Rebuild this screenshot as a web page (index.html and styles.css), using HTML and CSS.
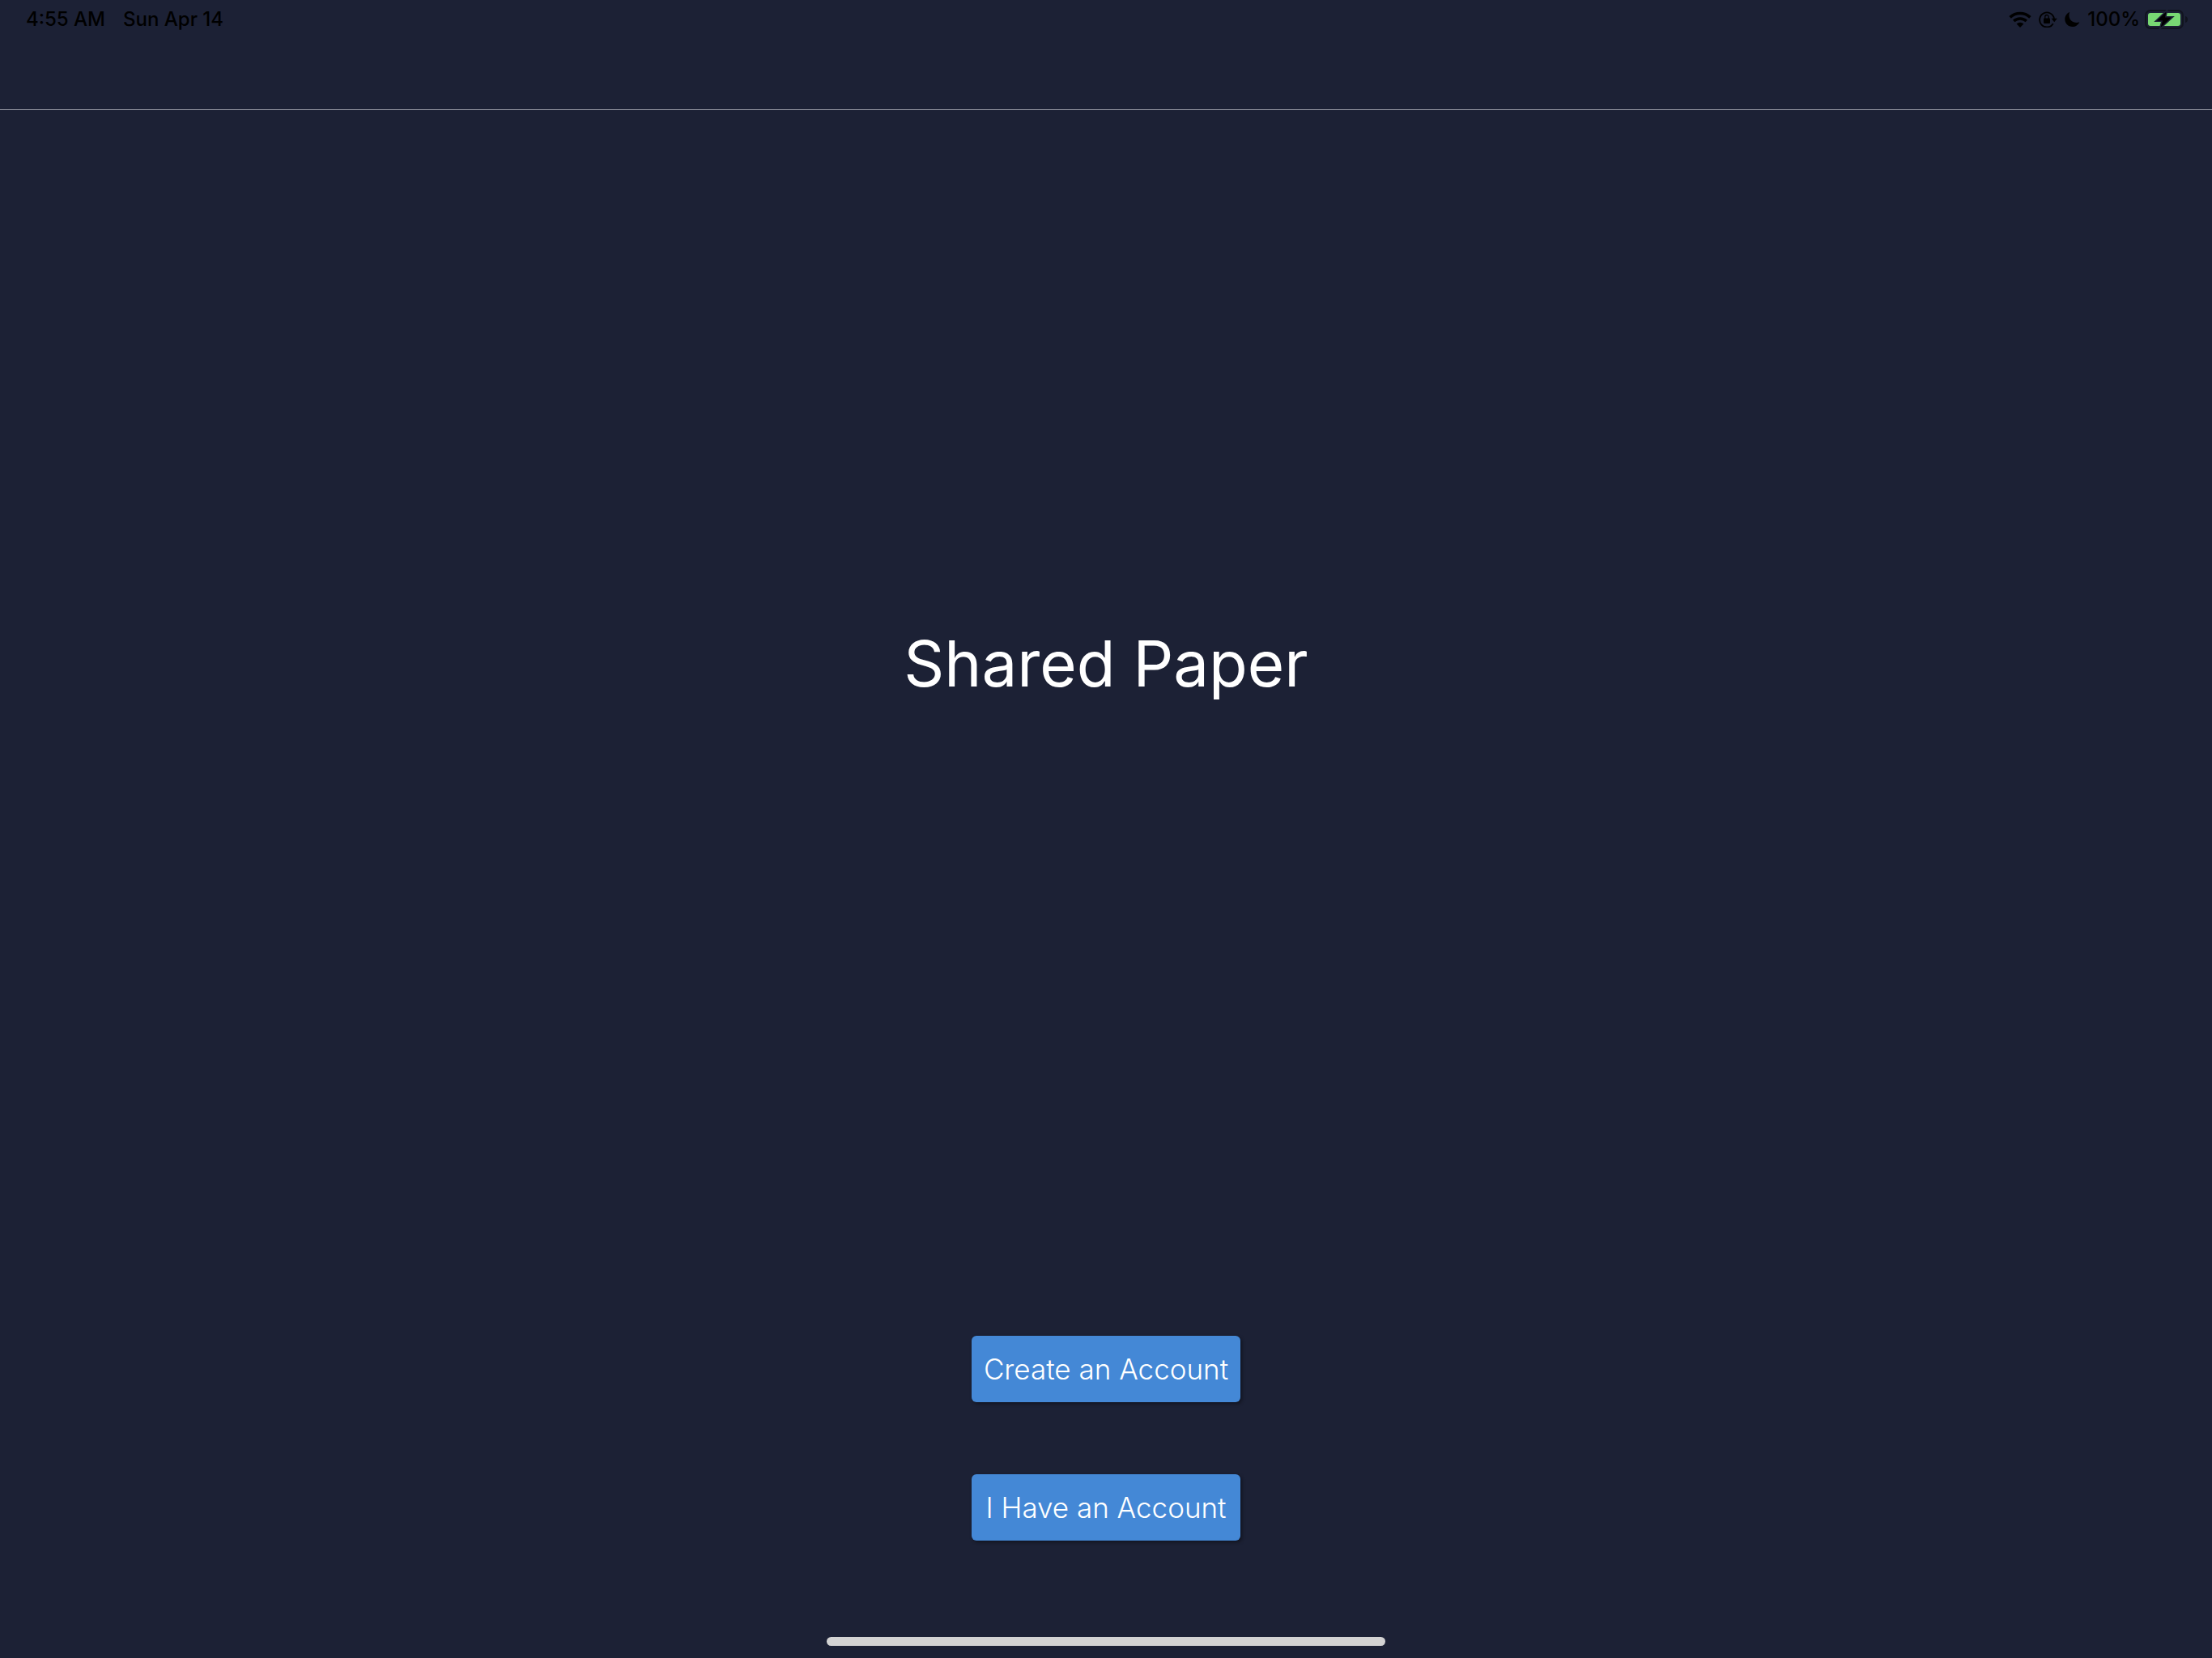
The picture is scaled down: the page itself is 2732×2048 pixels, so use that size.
FILE: index.html
```html
<!DOCTYPE html>
<html lang="en">
<head>
<meta charset="utf-8">
<meta name="viewport" content="width=device-width, initial-scale=1">
<title>Shared Paper</title>
<link rel="stylesheet" href="styles.css">
</head>
<body>
<header class="top-bar">
  <div class="status">
    <div class="status-group status-left">
      <span>4:55 AM</span>
      <span>Sun Apr 14</span>
    </div>
    <div class="status-group status-right">
      <svg class="icon" width="28" height="20" viewBox="0 0 28 20" aria-label="Wi-Fi" role="img">
        <path d="M1.6 7.4a18 18 0 0 1 24.8 0" fill="none" stroke="#000" stroke-width="3.6"/>
        <path d="M6.2 12a11.3 11.3 0 0 1 15.6 0" fill="none" stroke="#000" stroke-width="3.5"/>
        <path d="M14 20l-4.400-4.500a6.300 6.300 0 0 1 8.800 0z"/>
      </svg>
      <svg class="icon" width="23" height="20" viewBox="0 0 23 20" aria-label="Rotation lock" role="img">
        <path d="M17.800 15.200A9 9 0 1 1 19 9" fill="none" stroke="#000" stroke-width="1.800"/>
        <path d="M15.600 8.800h7.200l-3.600 4.400z"/>
        <rect x="6" y="8.500" width="8" height="6.500" rx="1"/>
        <path d="M7.800 9V6.700a2.200 2.200 0 0 1 4.400 0V9" fill="none" stroke="#000" stroke-width="1.300"/>
      </svg>
      <svg class="icon" width="19" height="20" viewBox="0 0 19 20" aria-label="Do not disturb" role="img">
        <path d="M6.200 1C2.800 2.300.3 5.800.3 9.800c0 5.100 4.100 9.200 9.200 9.200 4 0 7.400-2.300 8.800-5.800-1 .5-2.300.7-3.500.7-5.300 0-9.300-3.800-9.300-9 0-1.400.2-2.700.7-3.900z"/>
      </svg>
      <div class="status-group battery">
        <span>100%</span>
        <svg class="icon" width="53" height="24" viewBox="0 0 53 24" aria-label="Battery charging" role="img">
          <rect x="1" y="1" width="46" height="22" rx="6" fill="none" stroke="#11141f" stroke-width="2"/>
          <path d="M50 8c2 .6 3 2 3 4s-1 3.400-3 4z" fill="#11141f"/>
          <rect x="4" y="4" width="40" height="16" rx="3" fill="#78d873"/>
          <path d="M26.500 2.500L15 13.500h7L19.500 22 33 9.500h-8z" stroke="#1c2135" stroke-width="3"/>
          <path d="M26.500 2.500L15 13.500h7L19.500 22 33 9.500h-8z"/>
        </svg>
      </div>
    </div>
  </div>
</header>
<main class="welcome">
  <section class="hero">
    <h1 class="title">Shared Paper</h1>
  </section>
  <section class="actions">
    <button class="button" type="button">Create an Account</button>
    <button class="button" type="button">I Have an Account</button>
  </section>
</main>
<div class="home-indicator"></div>
</body>
</html>
```

FILE: styles.css
```css
* {
  box-sizing: border-box;
}

body {
  display: flex;
  flex-direction: column;
  min-height: 100vh;
  margin: 0;
  background: #1c2135;
  color: #fff;
  font-family: Inter, "Liberation Sans", sans-serif;
}

.top-bar {
  height: 136px;
  border-bottom: 1px solid #9b9da8;
}

.status {
  display: flex;
  justify-content: space-between;
  height: 48px;
  padding: 0 30px 0 32px;
  color: #000;
  font-size: 24px;
  font-weight: 500;
  line-height: 48px;
}

.status-group {
  display: flex;
  align-items: center;
}

.status-left {
  gap: 22px;
}

.status-right {
  gap: 9px;
}

.battery {
  gap: 6px;
}

.icon {
  flex: none;
}

.welcome {
  display: flex;
  flex: 1;
  flex-direction: column;
  padding-top: 4px;
}

.hero,
.actions {
  display: flex;
  flex-direction: column;
  align-items: center;
  justify-content: center;
}

.hero {
  flex: 5 0 0;
}

.actions {
  flex: 2 0 0;
  gap: 89px;
  padding-top: 4px;
}

.title {
  margin: 0;
  font-size: 78px;
  font-weight: 400;
  line-height: 96px;
}

.button {
  width: 332px;
  height: 82px;
  padding: 0;
  border: 0;
  border-radius: 6px;
  background: #4488d6;
  box-shadow: 2px 2px 4px rgba(0, 0, 0, 0.4);
  color: #fff;
  font-family: inherit;
  font-size: 35px;
  font-weight: 300;
  line-height: 42px;
}

.home-indicator {
  position: absolute;
  bottom: 15px;
  left: 50%;
  width: 690px;
  height: 11px;
  border-radius: 6px;
  background: #d3d3d3;
  transform: translateX(-50%);
}
```
